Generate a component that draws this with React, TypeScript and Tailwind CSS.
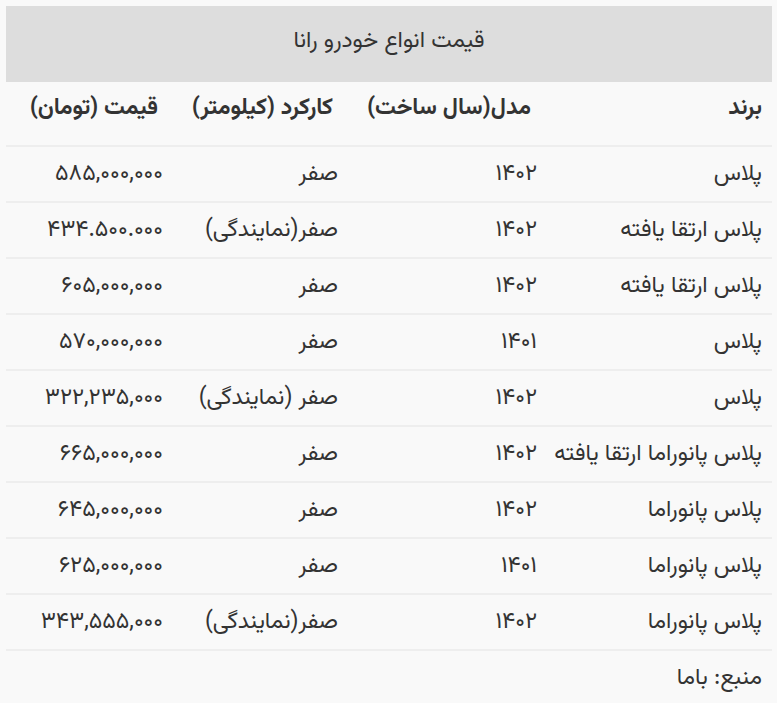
const rows = [
  ["پلاس", "۱۴۰۲", "صفر", "۵۸۵,۰۰۰,۰۰۰"],
  ["پلاس ارتقا یافته", "۱۴۰۲", "صفر(نمایندگی)", "۴۳۴.۵۰۰.۰۰۰"],
  ["پلاس ارتقا یافته", "۱۴۰۲", "صفر", "۶۰۵,۰۰۰,۰۰۰"],
  ["پلاس", "۱۴۰۱", "صفر", "۵۷۰,۰۰۰,۰۰۰"],
  ["پلاس", "۱۴۰۲", "صفر (نمایندگی)", "۳۲۲,۲۳۵,۰۰۰"],
  ["پلاس پانوراما ارتقا یافته", "۱۴۰۲", "صفر", "۶۶۵,۰۰۰,۰۰۰"],
  ["پلاس پانوراما", "۱۴۰۲", "صفر", "۶۴۵,۰۰۰,۰۰۰"],
  ["پلاس پانوراما", "۱۴۰۱", "صفر", "۶۲۵,۰۰۰,۰۰۰"],
  ["پلاس پانوراما", "۱۴۰۲", "صفر(نمایندگی)", "۳۴۳,۵۵۵,۰۰۰"],
];

export default function App() {
  return (
    <div
      dir="rtl"
      className="min-h-[703px] bg-[#f9f9f9] pt-[6px] pl-[6px] pr-[5px] text-[#333] text-[23px] leading-none"
      style={{ fontFamily: '"Vazirmatn", "Noto Sans Arabic", "DejaVu Sans", sans-serif' }}
    >
      <table className="w-full border-collapse table-fixed">
        <colgroup>
          <col className="w-[225px]" />
          <col className="w-[199px]" />
          <col className="w-[175px]" />
          <col />
        </colgroup>
        <thead>
          <tr>
            <th colSpan={4} className="h-[76px] pb-[5px] bg-[#dddddd] font-normal text-center">
              قیمت انواع خودرو رانا
            </th>
          </tr>
          <tr className="border-b-2 border-[#eeeeee]">
            <th className="h-[64px] pb-[10px] px-[10px] text-right font-bold">برند</th>
            <th className="pb-[10px] pr-[16px] pl-[4px] text-right font-bold whitespace-nowrap">مدل(سال ساخت)</th>
            <th className="pb-[10px] pr-[15px] pl-[4px] text-right font-bold whitespace-nowrap">کارکرد (کیلومتر)</th>
            <th className="pb-[10px] pr-[15px] pl-[4px] text-right font-bold whitespace-nowrap">قیمت (تومان)</th>
          </tr>
        </thead>
        <tbody>
          {rows.map((r, i) => (
            <tr key={i} className="border-b-2 border-[#eeeeee]">
              {r.map((c, j) => (
                <td key={j} className="h-[56px] px-[10px] text-right whitespace-nowrap">
                  {c}
                </td>
              ))}
            </tr>
          ))}
          <tr>
            <td colSpan={4} className="h-[52px] pt-[4px] px-[10px] text-right">
              منبع: باما
            </td>
          </tr>
        </tbody>
      </table>
    </div>
  );
}
